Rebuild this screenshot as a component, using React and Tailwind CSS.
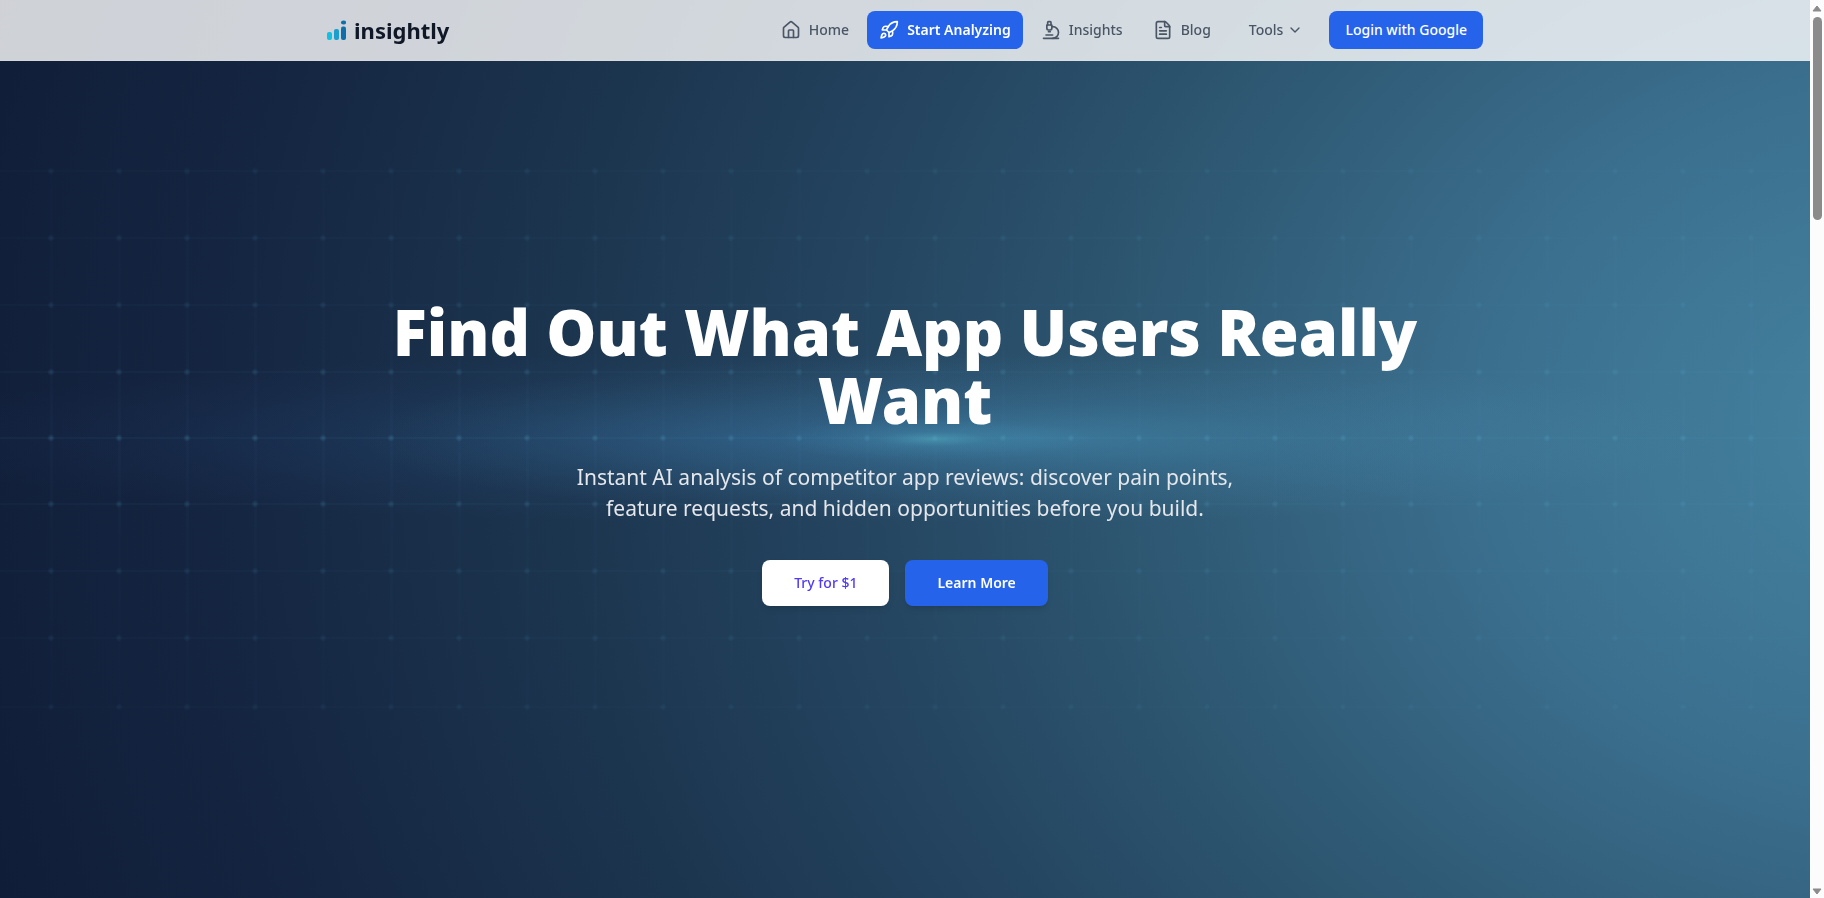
import React from "react";
import { ChevronDown, FileText, House, Microscope, Rocket } from "lucide-react";

const navLinks = [
  { label: "Home", href: "#home", icon: House },
  { label: "Start Analyzing", href: "#analyze", icon: Rocket, active: true },
  { label: "Insights", href: "#insights", icon: Microscope },
  { label: "Blog", href: "#blog", icon: FileText },
];

const gridColumns = Array.from({ length: 26 }, (_, i) => 51 + i * 68);
const gridRows = [171, 238, 305, 372, 438, 504, 571, 638, 707];

function Logo() {
  return (
    <a href="#home" className="flex items-center gap-2 text-gray-900">
      <svg width="19" height="22" viewBox="0 0 19 22" aria-hidden="true">
        <rect x="0" y="13" width="5" height="8" rx="2" fill="#12c0e2" />
        <rect x="7" y="10" width="5" height="11" rx="2" fill="#1b9fcd" />
        <rect x="14" y="7.5" width="5" height="13.5" rx="2" fill="#0f6fab" />
        <ellipse cx="16.5" cy="3.5" rx="2.6" ry="2" fill="#0f6fab" />
      </svg>
      <span className="text-[22px] leading-8 font-bold">insightly</span>
    </a>
  );
}

function Header() {
  return (
    <header className="relative z-10 border-b border-white/10 bg-white/80 px-4">
      <div className="mx-auto flex h-15 max-w-[1156px] items-center justify-between">
        <Logo />
        <nav className="flex items-center gap-1.5 text-sm font-medium text-gray-600">
          {navLinks.map(({ label, href, icon: Icon, active }) => (
            <a
              key={label}
              href={href}
              className={`flex h-[38px] items-center gap-2 rounded-lg px-3 ${
                active ? "bg-[#2563eb] font-semibold text-white" : ""
              }`}
            >
              <Icon size={20} strokeWidth={2} />
              {label}
            </a>
          ))}
          <button className="flex h-[38px] items-center gap-1 px-5">
            Tools
            <ChevronDown size={16} />
          </button>
          <button className="h-[38px] rounded-lg bg-[#2563eb] px-4 text-white">
            Login with Google
          </button>
        </nav>
      </div>
    </header>
  );
}

function Backdrop() {
  return (
    <svg
      className="absolute inset-0 h-full w-full"
      viewBox="0 0 1810 898"
      preserveAspectRatio="xMidYMid slice"
      aria-hidden="true"
    >
      <defs>
        <radialGradient id="bandBlue">
          <stop offset="0" stopColor="#3a7fd0" stopOpacity="0.22" />
          <stop offset="0.4" stopColor="#3a78c4" stopOpacity="0.11" />
          <stop offset="0.7" stopColor="#3b70b8" stopOpacity="0.05" />
          <stop offset="1" stopColor="#3b70b8" stopOpacity="0" />
        </radialGradient>
        <radialGradient id="bandTeal">
          <stop offset="0" stopColor="#52a9cc" stopOpacity="0.38" />
          <stop offset="0.4" stopColor="#52a3c4" stopOpacity="0.18" />
          <stop offset="1" stopColor="#529dbb" stopOpacity="0" />
        </radialGradient>
        <radialGradient id="flare">
          <stop offset="0" stopColor="#5cc0d0" stopOpacity="0.45" />
          <stop offset="0.35" stopColor="#4fa9c4" stopOpacity="0.16" />
          <stop offset="1" stopColor="#4797bd" stopOpacity="0" />
        </radialGradient>
        <radialGradient id="dot">
          <stop offset="0" stopColor="#5cb4d8" stopOpacity="0.6" />
          <stop offset="1" stopColor="#5cb4d8" stopOpacity="0" />
        </radialGradient>
        <linearGradient id="fade" x1="0" y1="0" x2="0" y2="1">
          <stop offset="0" stopColor="#fff" stopOpacity="0.35" />
          <stop offset="0.3" stopColor="#fff" stopOpacity="0.5" />
          <stop offset="0.5" stopColor="#fff" stopOpacity="0.9" />
          <stop offset="0.7" stopColor="#fff" stopOpacity="0.5" />
          <stop offset="1" stopColor="#fff" stopOpacity="0.3" />
        </linearGradient>
        <mask id="gridMask" maskUnits="userSpaceOnUse" x="0" y="160" width="1810" height="558">
          <rect x="0" y="160" width="1810" height="558" fill="url(#fade)" />
        </mask>
      </defs>
      <ellipse cx="760" cy="438" rx="900" ry="85" fill="url(#bandBlue)" />
      <ellipse cx="1040" cy="438" rx="680" ry="85" fill="url(#bandTeal)" />
      <ellipse cx="934" cy="439" rx="160" ry="22" fill="url(#flare)" />
      <g mask="url(#gridMask)">
        {gridColumns.map((x) => (
          <rect key={x} x={x - 1} y="171" width="3" height="536" fill="#5aa5d0" opacity="0.04" />
        ))}
        {gridRows.map((y) => (
          <rect key={y} x="0" y={y - 1} width="1810" height="2" fill="#5aa5d0" opacity="0.06" />
        ))}
        {gridRows.map((y) =>
          gridColumns.map((x) => (
            <circle key={`${x}-${y}`} cx={x} cy={y} r="4" fill="url(#dot)" opacity="0.45" />
          ))
        )}
      </g>
    </svg>
  );
}

function Hero() {
  return (
    <main className="relative flex flex-1 flex-col items-center justify-center px-4 pb-14 text-center">
      <h1 className="max-w-[1060px] text-[63px] leading-[68px] font-black text-white">
        Find Out What App Users Really Want
      </h1>
      <p className="mt-7 max-w-[700px] text-[21px] leading-[31px] text-gray-200">
        Instant AI analysis of competitor app reviews: discover pain points,
        feature requests, and hidden opportunities before you build.
      </p>
      <div className="mt-9 flex gap-4 text-sm font-medium">
        <button className="h-[46px] rounded-lg bg-white px-8 text-indigo-600 shadow-md">
          Try for $1
        </button>
        <button className="h-[46px] rounded-lg bg-[#2563eb] px-8 font-semibold text-white shadow-md">
          Learn More
        </button>
      </div>
    </main>
  );
}

function ScrollTrack() {
  return (
    <div className="flex w-[14px] shrink-0 flex-col items-center justify-between bg-[#fcfcfc]" aria-hidden="true">
      <div className="flex h-[220px] w-full flex-col items-center gap-[5px] pt-[5px]">
        <svg width="10" height="7" viewBox="0 0 10 7">
          <path d="M5 1 9 6H1Z" fill="#8b8b8b" stroke="#8b8b8b" strokeLinejoin="round" />
        </svg>
        <div className="w-[9px] flex-1 rounded-full bg-[#8b8b8b]" />
      </div>
      <svg className="mb-[3px]" width="10" height="7" viewBox="0 0 10 7">
        <path d="M1 1H9L5 6Z" fill="#8b8b8b" stroke="#8b8b8b" strokeLinejoin="round" />
      </svg>
    </div>
  );
}

export default function App() {
  return (
    <div className="flex min-h-screen font-['Noto_Sans','Open_Sans',sans-serif]">
      <div className="relative flex min-w-0 flex-1 flex-col bg-[radial-gradient(ellipse_2000px_1640px_at_106%_48%,#4583a2_0%,#3b6f8e_22%,#2f5a75_37%,#24445f_54%,#1c354f_68%,#152642_84%,#101d38_100%)]">
        <Backdrop />
        <Header />
        <Hero />
      </div>
      <ScrollTrack />
    </div>
  );
}
